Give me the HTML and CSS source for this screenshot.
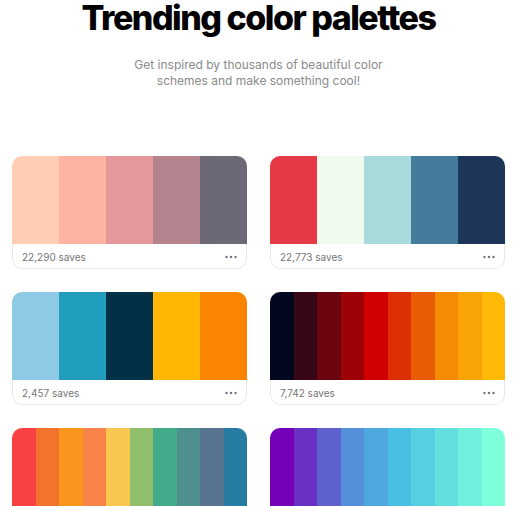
FILE: index.html
```html
<!DOCTYPE html>
<html lang="en">
<head>
<meta charset="utf-8">
<title>Trending color palettes</title>
<link rel="stylesheet" href="styles.css">
</head>
<body>
<header class="hero">
  <h1 class="title">Trending color palettes</h1>
  <p class="subtitle">Get inspired by thousands of beautiful color<br>schemes and make something cool!</p>
</header>
<main class="grid">
  <article class="card">
    <div class="palette">
      <span style="background:#ffcdb2"></span><span style="background:#ffb4a2"></span><span style="background:#e5989b"></span><span style="background:#b5838d"></span><span style="background:#6d6875"></span>
    </div>
    <div class="meta"><span class="saves">22,290 saves</span><svg class="more" width="12" height="4" viewBox="0 0 12 4"><circle cx="1.5" cy="2" r="1.2"/><circle cx="6" cy="2" r="1.2"/><circle cx="10.5" cy="2" r="1.2"/></svg></div>
  </article>
  <article class="card">
    <div class="palette">
      <span style="background:#e63946"></span><span style="background:#f1faee"></span><span style="background:#a8dadc"></span><span style="background:#457b9d"></span><span style="background:#1d3557"></span>
    </div>
    <div class="meta"><span class="saves">22,773 saves</span><svg class="more" width="12" height="4" viewBox="0 0 12 4"><circle cx="1.5" cy="2" r="1.2"/><circle cx="6" cy="2" r="1.2"/><circle cx="10.5" cy="2" r="1.2"/></svg></div>
  </article>
  <article class="card">
    <div class="palette">
      <span style="background:#8ecae6"></span><span style="background:#219ebc"></span><span style="background:#023047"></span><span style="background:#ffb703"></span><span style="background:#fb8500"></span>
    </div>
    <div class="meta"><span class="saves">2,457 saves</span><svg class="more" width="12" height="4" viewBox="0 0 12 4"><circle cx="1.5" cy="2" r="1.2"/><circle cx="6" cy="2" r="1.2"/><circle cx="10.5" cy="2" r="1.2"/></svg></div>
  </article>
  <article class="card">
    <div class="palette">
      <span style="background:#03071e"></span><span style="background:#370617"></span><span style="background:#6a040f"></span><span style="background:#9d0208"></span><span style="background:#d00000"></span><span style="background:#dc2f02"></span><span style="background:#e85d04"></span><span style="background:#f48c06"></span><span style="background:#faa307"></span><span style="background:#ffba08"></span>
    </div>
    <div class="meta"><span class="saves">7,742 saves</span><svg class="more" width="12" height="4" viewBox="0 0 12 4"><circle cx="1.5" cy="2" r="1.2"/><circle cx="6" cy="2" r="1.2"/><circle cx="10.5" cy="2" r="1.2"/></svg></div>
  </article>
  <article class="card">
    <div class="palette">
      <span style="background:#f94144"></span><span style="background:#f3722c"></span><span style="background:#f8961e"></span><span style="background:#f9844a"></span><span style="background:#f9c74f"></span><span style="background:#90be6d"></span><span style="background:#43aa8b"></span><span style="background:#4d908e"></span><span style="background:#577590"></span><span style="background:#277da1"></span>
    </div>
    <div class="meta"><span class="saves">5,120 saves</span><svg class="more" width="12" height="4" viewBox="0 0 12 4"><circle cx="1.5" cy="2" r="1.2"/><circle cx="6" cy="2" r="1.2"/><circle cx="10.5" cy="2" r="1.2"/></svg></div>
  </article>
  <article class="card">
    <div class="palette">
      <span style="background:#7400b8"></span><span style="background:#6930c3"></span><span style="background:#5e60ce"></span><span style="background:#5390d9"></span><span style="background:#4ea8de"></span><span style="background:#48bfe3"></span><span style="background:#56cfe1"></span><span style="background:#64dfdf"></span><span style="background:#72efdd"></span><span style="background:#80ffdb"></span>
    </div>
    <div class="meta"><span class="saves">6,351 saves</span><svg class="more" width="12" height="4" viewBox="0 0 12 4"><circle cx="1.5" cy="2" r="1.2"/><circle cx="6" cy="2" r="1.2"/><circle cx="10.5" cy="2" r="1.2"/></svg></div>
  </article>
</main>
</body>
</html>
```
FILE: styles.css
```css
* { box-sizing: border-box; }
html, body { margin: 0; padding: 0; background: #fff; }
body {
  font-family: Inter, "Noto Sans", sans-serif;
  color: #000;
  width: 517px;
}
.hero {
  display: flex;
  flex-direction: column;
  align-items: center;
  text-align: center;
}
.title {
  margin: 0;
  font-size: 34px;
  line-height: 36px;
  font-weight: 800;
  letter-spacing: -1.5px;
}
.subtitle {
  margin: 21px 0 0;
  font-size: 12px;
  line-height: 16px;
  color: #8a8a8a;
}
.grid {
  display: grid;
  grid-template-columns: 235px 235px;
  column-gap: 23px;
  row-gap: 23px;
  padding: 67px 0 0 12px;
}
.card {
  display: flex;
  flex-direction: column;
  border-radius: 10px;
  overflow: hidden;
  background: #fff;
}
.palette {
  display: flex;
  height: 88px;
}
.palette span { flex: 1; }
.meta {
  display: flex;
  align-items: center;
  justify-content: space-between;
  height: 25px;
  padding: 2px 9px 0 9px;
  border: 1px solid #e8e8e8;
  border-top: none;
  border-radius: 0 0 10px 10px;
}
.saves {
  font-size: 10px;
  color: #767676;
}
.more { fill: #6b7385; }
```
